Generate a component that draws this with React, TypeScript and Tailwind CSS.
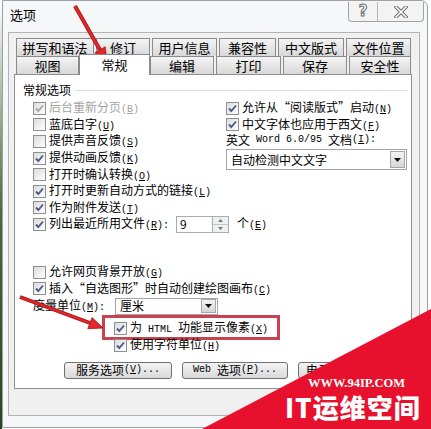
import React from "react";

const cjk = "font-['SimSun','Noto_Sans_CJK_SC',sans-serif]";

// mono ascii, SimSun-like half width
function A({ children }: { children: React.ReactNode }) {
  return <span className="font-['Liberation_Mono',monospace] text-[10px] whitespace-pre">{children}</span>;
}

function Key({ k, colon }: { k: string; colon?: boolean }) {
  return (
    <A>
      (<span className="underline">{k}</span>){colon ? ":" : ""}
    </A>
  );
}

function Box({ checked, disabled }: { checked?: boolean; disabled?: boolean }) {
  return (
    <span className="w-[13px] h-[13px] shrink-0 border border-[#8f8f8f] bg-gradient-to-br from-[#dcdcdc] to-white flex items-center justify-center">
      {checked && (
        <svg width="11" height="11" viewBox="0 0 11 11">
          <path
            d="M2 5.5 L4.3 8 L9 2.5"
            fill="none"
            stroke={disabled ? "#a8a8a8" : "#4b5d80"}
            strokeWidth={1.9}
          />
        </svg>
      )}
    </span>
  );
}

function Check({
  checked,
  disabled,
  children,
}: {
  checked?: boolean;
  disabled?: boolean;
  children: React.ReactNode;
}) {
  return (
    <div className={`h-[16.6px] flex items-center gap-[3px] whitespace-nowrap ${disabled ? "text-[#a3a3a3]" : ""}`}>
      <Box checked={checked} disabled={disabled} />
      <span className="leading-none">{children}</span>
    </div>
  );
}

function DropBtn({ h }: { h: string }) {
  return (
    <span className={`w-[15px] shrink-0 ${h} border border-[#a7a7a7] bg-gradient-to-b from-[#f4f4f4] to-[#d6d6d6] flex items-center justify-center`}>
      <svg width="7" height="4" viewBox="0 0 7 4">
        <path d="M0 0 H7 L3.5 4 Z" fill="#111" />
      </svg>
    </span>
  );
}

function Tab({ w, label }: { w: string; label: string }) {
  return (
    <div className={`${w} h-[18px] border border-[#8b8b8b] border-b-0 bg-gradient-to-b from-[#f4f4f4] to-[#d8d8d8] flex items-center justify-center text-[13px] leading-none`}>
      {label}
    </div>
  );
}

function Btn({ w, children }: { w: string; children: React.ReactNode }) {
  return (
    <div className={`${w} h-[17px] border border-[#707070] rounded-[3px] bg-gradient-to-b from-[#f3f3f3] to-[#d9d9d9] flex items-center justify-center leading-none whitespace-nowrap`}>
      {children}
    </div>
  );
}

export default function App() {
  return (
    <div className={`relative w-[431px] h-[429px] overflow-hidden bg-white text-[12px] text-black ${cjk}`}>
      <div className="flex h-full">
        <div className="w-[2px] h-full bg-gradient-to-b from-white via-[#4b6a35] to-[#2e4522]" />
        <div className="w-[426px] h-[428px] border border-[#9ca1a6] rounded-tr-[7px] bg-[#f6f7f8] flex flex-col">
          {/* title bar */}
          <div className="h-[31px] flex items-start justify-between">
            <span className="pl-[7px] pt-[7px] text-[13px] leading-none">选项</span>
            <div className="mr-[3px] mt-[1px] w-[76px] h-[20px] border border-[#a3a3a3] border-t-0 rounded-b-[4px] bg-[#f3f3f3] flex">
              <div className="w-[29px] border-r border-[#b5b5b5] flex items-center justify-center text-[15px] font-bold text-white [-webkit-text-stroke:1px_#707070] font-['DejaVu_Sans',sans-serif] leading-none">
                ?
              </div>
              <div className="flex-1 flex items-center justify-center">
                <svg width="14" height="12" viewBox="0 0 14 12">
                  <path d="M2 1 L12 11 M12 1 L2 11" stroke="#6f6f6f" strokeWidth={3.6} strokeLinecap="square" />
                  <path d="M2 1 L12 11 M12 1 L2 11" stroke="#fafafa" strokeWidth={1.6} strokeLinecap="square" />
                </svg>
              </div>
            </div>
          </div>

          {/* panel */}
          <div className="ml-[5px] w-[412px] h-[384px] border border-[#b3b3b3] bg-[#f0f0f0] pt-[5px]">
            <div className="ml-[7px] flex gap-[2px]">
              <Tab w="w-[78px]" label="拼写和语法" />
              <Tab w="w-[54px]" label="修订" />
              <Tab w="w-[65px]" label="用户信息" />
              <Tab w="w-[57px]" label="兼容性" />
              <Tab w="w-[66px]" label="中文版式" />
              <Tab w="w-[65px]" label="文件位置" />
            </div>
            <div className="ml-[7px] h-[18px] flex items-end">
              <Tab w="w-[63px]" label="视图" />
              <div className="relative z-10 w-[71px] h-[21px] mb-[-1px] border border-[#8b8b8b] border-b-0 bg-white flex items-start justify-center pt-[3px] text-[13px] leading-none">
                常规
              </div>
              <div className="flex gap-[2px]">
                <Tab w="w-[64px]" label="编辑" />
                <Tab w="w-[65px]" label="打印" />
                <Tab w="w-[64px]" label="保存" />
                <Tab w="w-[62px]" label="安全性" />
              </div>
            </div>

            {/* content */}
            <div className="ml-[5px] w-[398px] h-[315px] border border-[#8e8f8f] bg-white">
              <div className="mt-[7px] pl-[8px] flex items-center h-[16px]">
                <span className="leading-none">常规选项</span>
                <span className="flex-1 h-px bg-[#d5dde3] ml-[4px] mr-[4px]" />
              </div>

              <div className="mt-[2px] flex">
                <div className="w-[211px] shrink-0 pl-[18px]">
                  <Check checked disabled>
                    后台重新分页<Key k="B" />
                  </Check>
                  <Check>
                    蓝底白字<Key k="U" />
                  </Check>
                  <Check>
                    提供声音反馈<Key k="S" />
                  </Check>
                  <Check checked>
                    提供动画反馈<Key k="K" />
                  </Check>
                  <Check>
                    打开时确认转换<Key k="O" />
                  </Check>
                  <Check checked>
                    打开时更新自动方式的链接<Key k="L" />
                  </Check>
                  <Check checked>
                    作为附件发送<Key k="T" />
                  </Check>
                  <div className="h-[16.6px] flex items-center whitespace-nowrap">
                    <Box checked />
                    <span className="ml-[3px] w-[127px] shrink-0 leading-none">
                      列出最近所用文件<Key k="R" colon />
                    </span>
                    <span className="w-[37px] h-[17px] shrink-0 border border-[#a5acb5] bg-white flex items-center pl-[3px] leading-none">9</span>
                    <span className="w-[16px] h-[17px] shrink-0 border border-[#a5acb5] border-l-0 bg-[#f0f0f0] flex flex-col">
                      <span className="flex-1 border-b border-[#c5c5c5] flex items-center justify-center">
                        <svg width="5" height="3" viewBox="0 0 5 3"><path d="M0 3 H5 L2.5 0 Z" fill="#777" /></svg>
                      </span>
                      <span className="flex-1 flex items-center justify-center">
                        <svg width="5" height="3" viewBox="0 0 5 3"><path d="M0 0 H5 L2.5 3 Z" fill="#777" /></svg>
                      </span>
                    </span>
                    <span className="ml-[8px] shrink-0 leading-none">
                      个<Key k="E" />
                    </span>
                  </div>
                </div>

                <div className="flex-1">
                  <Check checked>
                    允许从“阅读版式”启动<Key k="N" />
                  </Check>
                  <Check checked>
                    中文字体也应用于西文<Key k="F" />
                  </Check>
                  <div className="h-[13px] flex items-center leading-none whitespace-nowrap">
                    英文<A> Word 6.0/95 </A>文档<Key k="I" colon />
                  </div>
                  <div className="mt-[3px] w-[181px] h-[21px] border border-[#a5a5a5] bg-white flex items-center justify-between pl-[4px] pr-[1px]">
                    <span className="leading-none">自动检测中文文字</span>
                    <DropBtn h="h-[17px]" />
                  </div>
                </div>
              </div>

              <div className="mt-[31px] pl-[18px]">
                <Check>
                  允许网页背景开放<Key k="G" />
                </Check>
                <Check checked>
                  插入“自选图形”时自动创建绘图画布<Key k="C" />
                </Check>
                <div className="mt-[1px] h-[17px] flex items-center whitespace-nowrap">
                  <span className="w-[82px] shrink-0 leading-none">
                    度量单位<Key k="M" colon />
                  </span>
                  <span className="w-[103px] h-[17px] shrink-0 border border-[#a5a5a5] bg-white flex items-center justify-between pl-[4px] pr-[1px]">
                    <span className="leading-none">厘米</span>
                    <DropBtn h="h-[14px]" />
                  </span>
                </div>
              </div>

              <div className="ml-[87px] w-[178px] h-[25px] border-[3px] border-[#c9434f] flex items-center pl-[9px] pt-[2px]">
                <Check checked>
                  为<A> HTML </A>功能显示像素<Key k="X" />
                </Check>
              </div>
              <div className="mt-[-3px] pl-[99px]">
                <Check checked>
                  使用字符单位<Key k="H" />
                </Check>
              </div>

              <div className="mt-[8px] pl-[49px] flex gap-[10px]">
                <Btn w="w-[108px]">
                  服务选项<Key k="V" />
                  <A>...</A>
                </Btn>
                <Btn w="w-[106px]">
                  <A>Web </A>选项<Key k="P" />
                  <A>...</A>
                </Btn>
                <Btn w="w-[106px]">
                  电子邮件选项<A>...</A>
                </Btn>
              </div>
            </div>
          </div>
        </div>
      </div>

      {/* annotation arrows */}
      <svg className="absolute left-0 top-0 pointer-events-none" width="431" height="429" viewBox="0 0 431 429">
        <line x1="75" y1="6" x2="100" y2="50" stroke="#a41818" strokeWidth="4" />
        <line x1="75" y1="6" x2="100" y2="50" stroke="#e2262b" strokeWidth="2.4" />
        <path d="M107 62 L94.8 52.8 L105.2 46.8 Z" fill="#e2262b" stroke="#a41818" strokeWidth="0.8" />
        <line x1="20" y1="297" x2="90" y2="323" stroke="#a41818" strokeWidth="4" />
        <line x1="20" y1="297" x2="90" y2="323" stroke="#e2262b" strokeWidth="2.4" />
        <path d="M103 328 L87.8 328.7 L92 317.5 Z" fill="#e2262b" stroke="#a41818" strokeWidth="0.8" />
        <path d="M202 429 L431 309 L431 429 Z" fill="#e8112d" />
      </svg>

      {/* watermark */}
      <div className="absolute left-[308px] top-[377px] text-white font-['Liberation_Serif',serif] font-bold text-[12.5px] leading-none">
        WWW.94IP.COM
      </div>
      <div className="absolute left-[285px] top-[394px] text-white font-['Noto_Sans_CJK_SC',sans-serif] font-black text-[26px] leading-none tracking-[1px]">
        IT运维空间
      </div>
    </div>
  );
}
